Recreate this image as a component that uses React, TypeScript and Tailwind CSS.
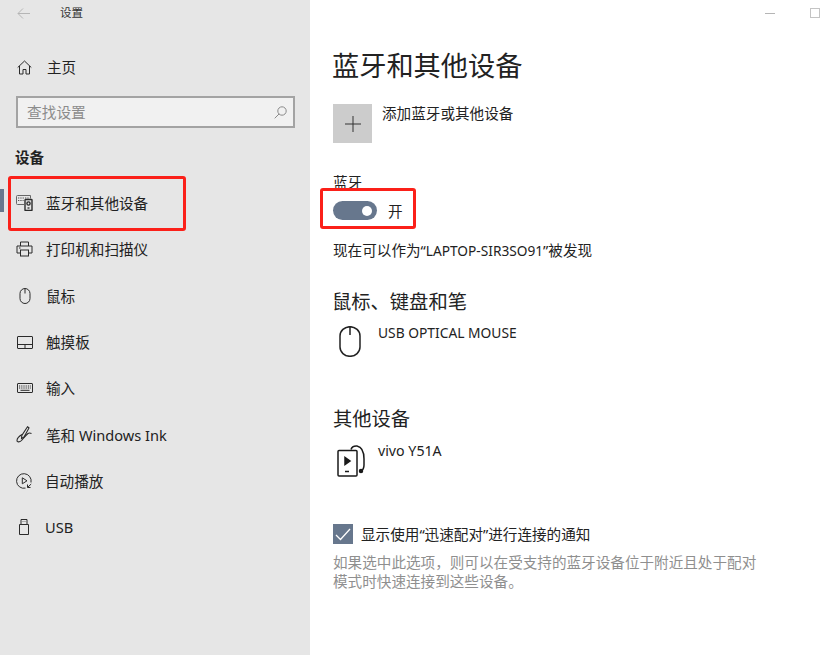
import React from "react";

const S = { fill: "none", stroke: "#2b2b2b", strokeWidth: 1 } as const;

const icons: Record<string, React.ReactNode> = {
  bt: (
    <svg width="17" height="16" viewBox="0 0 17 16" {...S}>
      <path d="M8 9.500H1.500a1 1 0 0 1-1-1V1.500a1 1 0 0 1 1-1h13v3" stroke="#666" />
      <path d="M2 3h1.300M4.300 3h1.300M6.600 3h1.300M9 3h1.300M11.300 3h1.300M2 5.500h1.300M4.300 5.500h1.300M6.600 5.500h1" stroke="#555" />
      <rect x="9" y="4.500" width="7" height="11" rx=".6" strokeWidth="1.400" fill="#e6e6e6" />
      <circle cx="12.500" cy="8.500" r="1.600" strokeWidth="1.400" />
      <path d="M11.500 13h2" strokeWidth="1.300" />
    </svg>
  ),
  print: (
    <svg width="17" height="16" viewBox="0 0 17 16" {...S}>
      <path d="M4.500 5V1h8v4M4.500 12H1V5h15v7h-3.500" />
      <rect x="4.500" y="9" width="8" height="6" />
      <path d="M3 7h1.500" />
    </svg>
  ),
  mouse: (
    <svg width="12" height="16" viewBox="0 0 12 16" {...S}>
      <path d="M1 5.500a5 5 0 0 1 10 0v5a5 5 0 0 1-10 0zM6 .5v5" />
    </svg>
  ),
  pad: (
    <svg width="16" height="13" viewBox="0 0 16 13" {...S}>
      <rect x=".5" y=".5" width="15" height="12" rx=".5" />
      <path d="M.5 8.500h15M8 8.500v4" />
    </svg>
  ),
  kb: (
    <svg width="16" height="10" viewBox="0 0 16 10" {...S}>
      <rect x=".5" y=".5" width="15" height="9" rx=".5" />
      <path d="M2 3h12M2 5h12" strokeDasharray="1 .8" />
      <path d="M3.500 7.300h9" />
    </svg>
  ),
  pen: (
    <svg width="17" height="17" viewBox="0 0 17 17" {...S} strokeWidth={1.100}>
      <path d="M11.500.8 13 2 8 11 5.500 12.500 5.800 9.500z" />
      <path d="M6 8.500C3.500 10 1 12 1 14.500c0 2 3 1.800 5-.5s4-5 6-6.500c1-.7 2.500-.5 3.500 0" />
    </svg>
  ),
  play: (
    <svg width="16" height="16" viewBox="0 0 16 16" {...S}>
      <path d="M9.500 15.100A7.300 7.300 0 1 1 15 9.500" />
      <path d="M6.300 4.800v6l4.700-3zM15.200 11l-3.500 3.300M11.500 11.500v3h3" />
    </svg>
  ),
  usb: (
    <svg width="10" height="16" viewBox="0 0 10 16" {...S}>
      <path d="M2 5.500V.5h6v5M.5 5.500h9v10h-9zM3.700 2.500h.6M5.700 2.500h.6" />
    </svg>
  ),
};

const items: { icon: string; label: string; narrow?: boolean; active?: boolean }[] = [
  { icon: "bt", label: "蓝牙和其他设备", active: true },
  { icon: "print", label: "打印机和扫描仪" },
  { icon: "mouse", label: "鼠标" },
  { icon: "pad", label: "触摸板" },
  { icon: "kb", label: "输入" },
  { icon: "pen", label: "笔和 Windows Ink" },
  { icon: "play", label: "自动播放", narrow: true },
  { icon: "usb", label: "USB", narrow: true },
];

export default function App() {
  return (
    <div className="relative flex h-[655px] w-[830px] overflow-hidden bg-white text-[#222] font-['Noto_Sans','Noto_Sans_CJK_SC',sans-serif]">
      <aside className="flex h-full w-[310px] shrink-0 flex-col bg-[#e6e6e6]">
        <div className="flex h-[26px] items-center">
          <svg className="ml-[17px]" width="13" height="11" viewBox="0 0 13 11" fill="none" stroke="#b5b5b5">
            <path d="M6 .5 1 5.500l5 5M1 5.500h12" />
          </svg>
          <span className="ml-[30px] text-[11.500px] leading-none text-[#333]">设置</span>
        </div>

        <div className="mt-[28px] flex h-[26px] items-center">
          <svg className="ml-[17px]" width="15" height="15" viewBox="0 0 15 15" fill="none" stroke="#2b2b2b">
            <path d="M.7 7.500 7.500 1l6.800 6.500M2.500 6v8h3.500V9.500h3V14h3.500V6" />
          </svg>
          <span className="ml-[15px] text-[14.500px] leading-none">主页</span>
        </div>

        <div className="ml-[16px] mr-[15px] mt-[16px] flex h-[32px] items-center justify-between border-2 border-[#a3a3a3] bg-[#f1f1f1] pl-[9px] pr-[6px]">
          <span className="text-[14.700px] leading-none text-[#8c8c8c]">查找设置</span>
          <svg width="13" height="13" viewBox="0 0 13 13" fill="none" stroke="#8a8a8a">
            <circle cx="8" cy="5" r="4.200" />
            <path d="M5 8 .7 12.300" />
          </svg>
        </div>

        <div className="ml-[15px] mt-[20px] text-[14.500px] font-bold leading-[18px] text-[#222]">设备</div>

        <nav className="mt-[14px] flex flex-col">
          {items.map((it) => (
            <div key={it.label} className="relative flex h-[46.330px] items-center">
              {it.active && <div className="absolute left-0 top-[9px] h-[23px] w-[4px] bg-[#67778d]" />}
              <div className={`flex justify-center pl-[15px] pr-[12px] ${it.narrow ? "w-[45px]" : "w-[46px]"}`}>
                {icons[it.icon]}
              </div>
              <span className="text-[14.600px] leading-none text-[#222]">{it.label}</span>
            </div>
          ))}
        </nav>
      </aside>

      <main className="flex min-w-0 flex-1 flex-col pl-[23px]">
        <div className="flex h-[26px] items-center justify-end">
          <div className="mr-[35px] h-px w-[10px] bg-[#b5b5b5]" />
          <div className="mr-[10px] h-[10px] w-[10px] border border-[#c4c4c4]" />
        </div>

        <h1 className="mt-[20px] -ml-px text-[27.200px] font-normal leading-[40px] text-[#222]">蓝牙和其他设备</h1>

        <div className="mt-[18px] flex items-start">
          <div className="flex h-[39px] w-[39px] items-center justify-center bg-[#cccccc]">
            <svg width="16" height="16" viewBox="0 0 16 16" stroke="#333" fill="none">
              <path d="M8 0v16M0 8h16" />
            </svg>
          </div>
          <span className="ml-[10px] text-[14.600px] leading-[18px]">添加蓝牙或其他设备</span>
        </div>

        <div className="mt-[30px] text-[14.600px] leading-[18px]">蓝牙</div>

        <div className="mt-[10px] flex items-center">
          <div className="flex h-[19px] w-[44px] items-center justify-end rounded-full bg-[#67778d] pr-[5px]">
            <div className="h-[10px] w-[10px] rounded-full bg-white" />
          </div>
          <span className="ml-[11px] text-[14.600px] leading-[18px]">开</span>
        </div>

        <div className="mt-[20px] text-[14.600px] leading-[20px]">
          现在可以作为“<span className="text-[13.700px]">LAPTOP-SIR3SO91</span>”被发现
        </div>

        <h2 className="mt-[28px] -ml-px text-[19.300px] font-normal leading-[26px]">鼠标、键盘和笔</h2>

        <div className="mt-[9px] flex items-start">
          <svg className="ml-[6px] mt-[2px]" width="22" height="31" viewBox="0 0 22 31" fill="none" stroke="#222" strokeWidth="1.500">
            <path d="M1 10a10 9.300 0 0 1 20 0v11a10 9.300 0 0 1-20 0zM11 1v8" />
          </svg>
          <span className="ml-[17px] text-[13.800px] leading-[18px]">USB OPTICAL MOUSE</span>
        </div>

        <h2 className="mt-[49px] text-[19.300px] font-normal leading-[26px]">其他设备</h2>

        <div className="mt-[10px] flex items-start">
          <svg className="ml-[4px] mt-[3px]" width="28" height="33" viewBox="0 0 28 33" fill="none" stroke="#1a1a1a" strokeWidth="1.500">
            <path d="M14 4.500C15 1 17 .8 20 1c5 1 7 5 7 13v6c0 3-1 5-3 6" />
            <rect x="1" y="5.500" width="19" height="25.500" rx="1" />
            <path d="M8 12.500v7l5-3.500z" fill="#1a1a1a" />
            <path d="M8 26.500h4" />
            <circle cx="24" cy="26" r="1.500" fill="#1a1a1a" />
          </svg>
          <span className="ml-[13px] text-[14.200px] leading-[18px]">vivo Y51A</span>
        </div>

        <div className="mt-[46px] flex items-center">
          <div className="flex h-[20px] w-[20px] items-center justify-center bg-[#67778d]">
            <svg width="16" height="13" viewBox="0 0 16 13" fill="none" stroke="#fff" strokeWidth="1.300">
              <path d="M1 7l4.500 4.500L15 1" />
            </svg>
          </div>
          <span className="ml-[8px] text-[14.600px] leading-[18px]">显示使用“迅速配对”进行连接的通知</span>
        </div>

        <p className="mt-[9px] w-[430px] text-[14.600px] leading-[19px] text-[#8f8f8f]">
          如果选中此选项，则可以在受支持的蓝牙设备位于附近且处于配对模式时快速连接到这些设备。
        </p>
      </main>

      <div className="absolute left-[8px] top-[176px] h-[55px] w-[178px] rounded-[3px] border-[3px] border-[#fb2019]" />
      <div className="absolute left-[320px] top-[188px] h-[41px] w-[96px] rounded-[3px] border-[3px] border-[#fb2019]" />
    </div>
  );
}
